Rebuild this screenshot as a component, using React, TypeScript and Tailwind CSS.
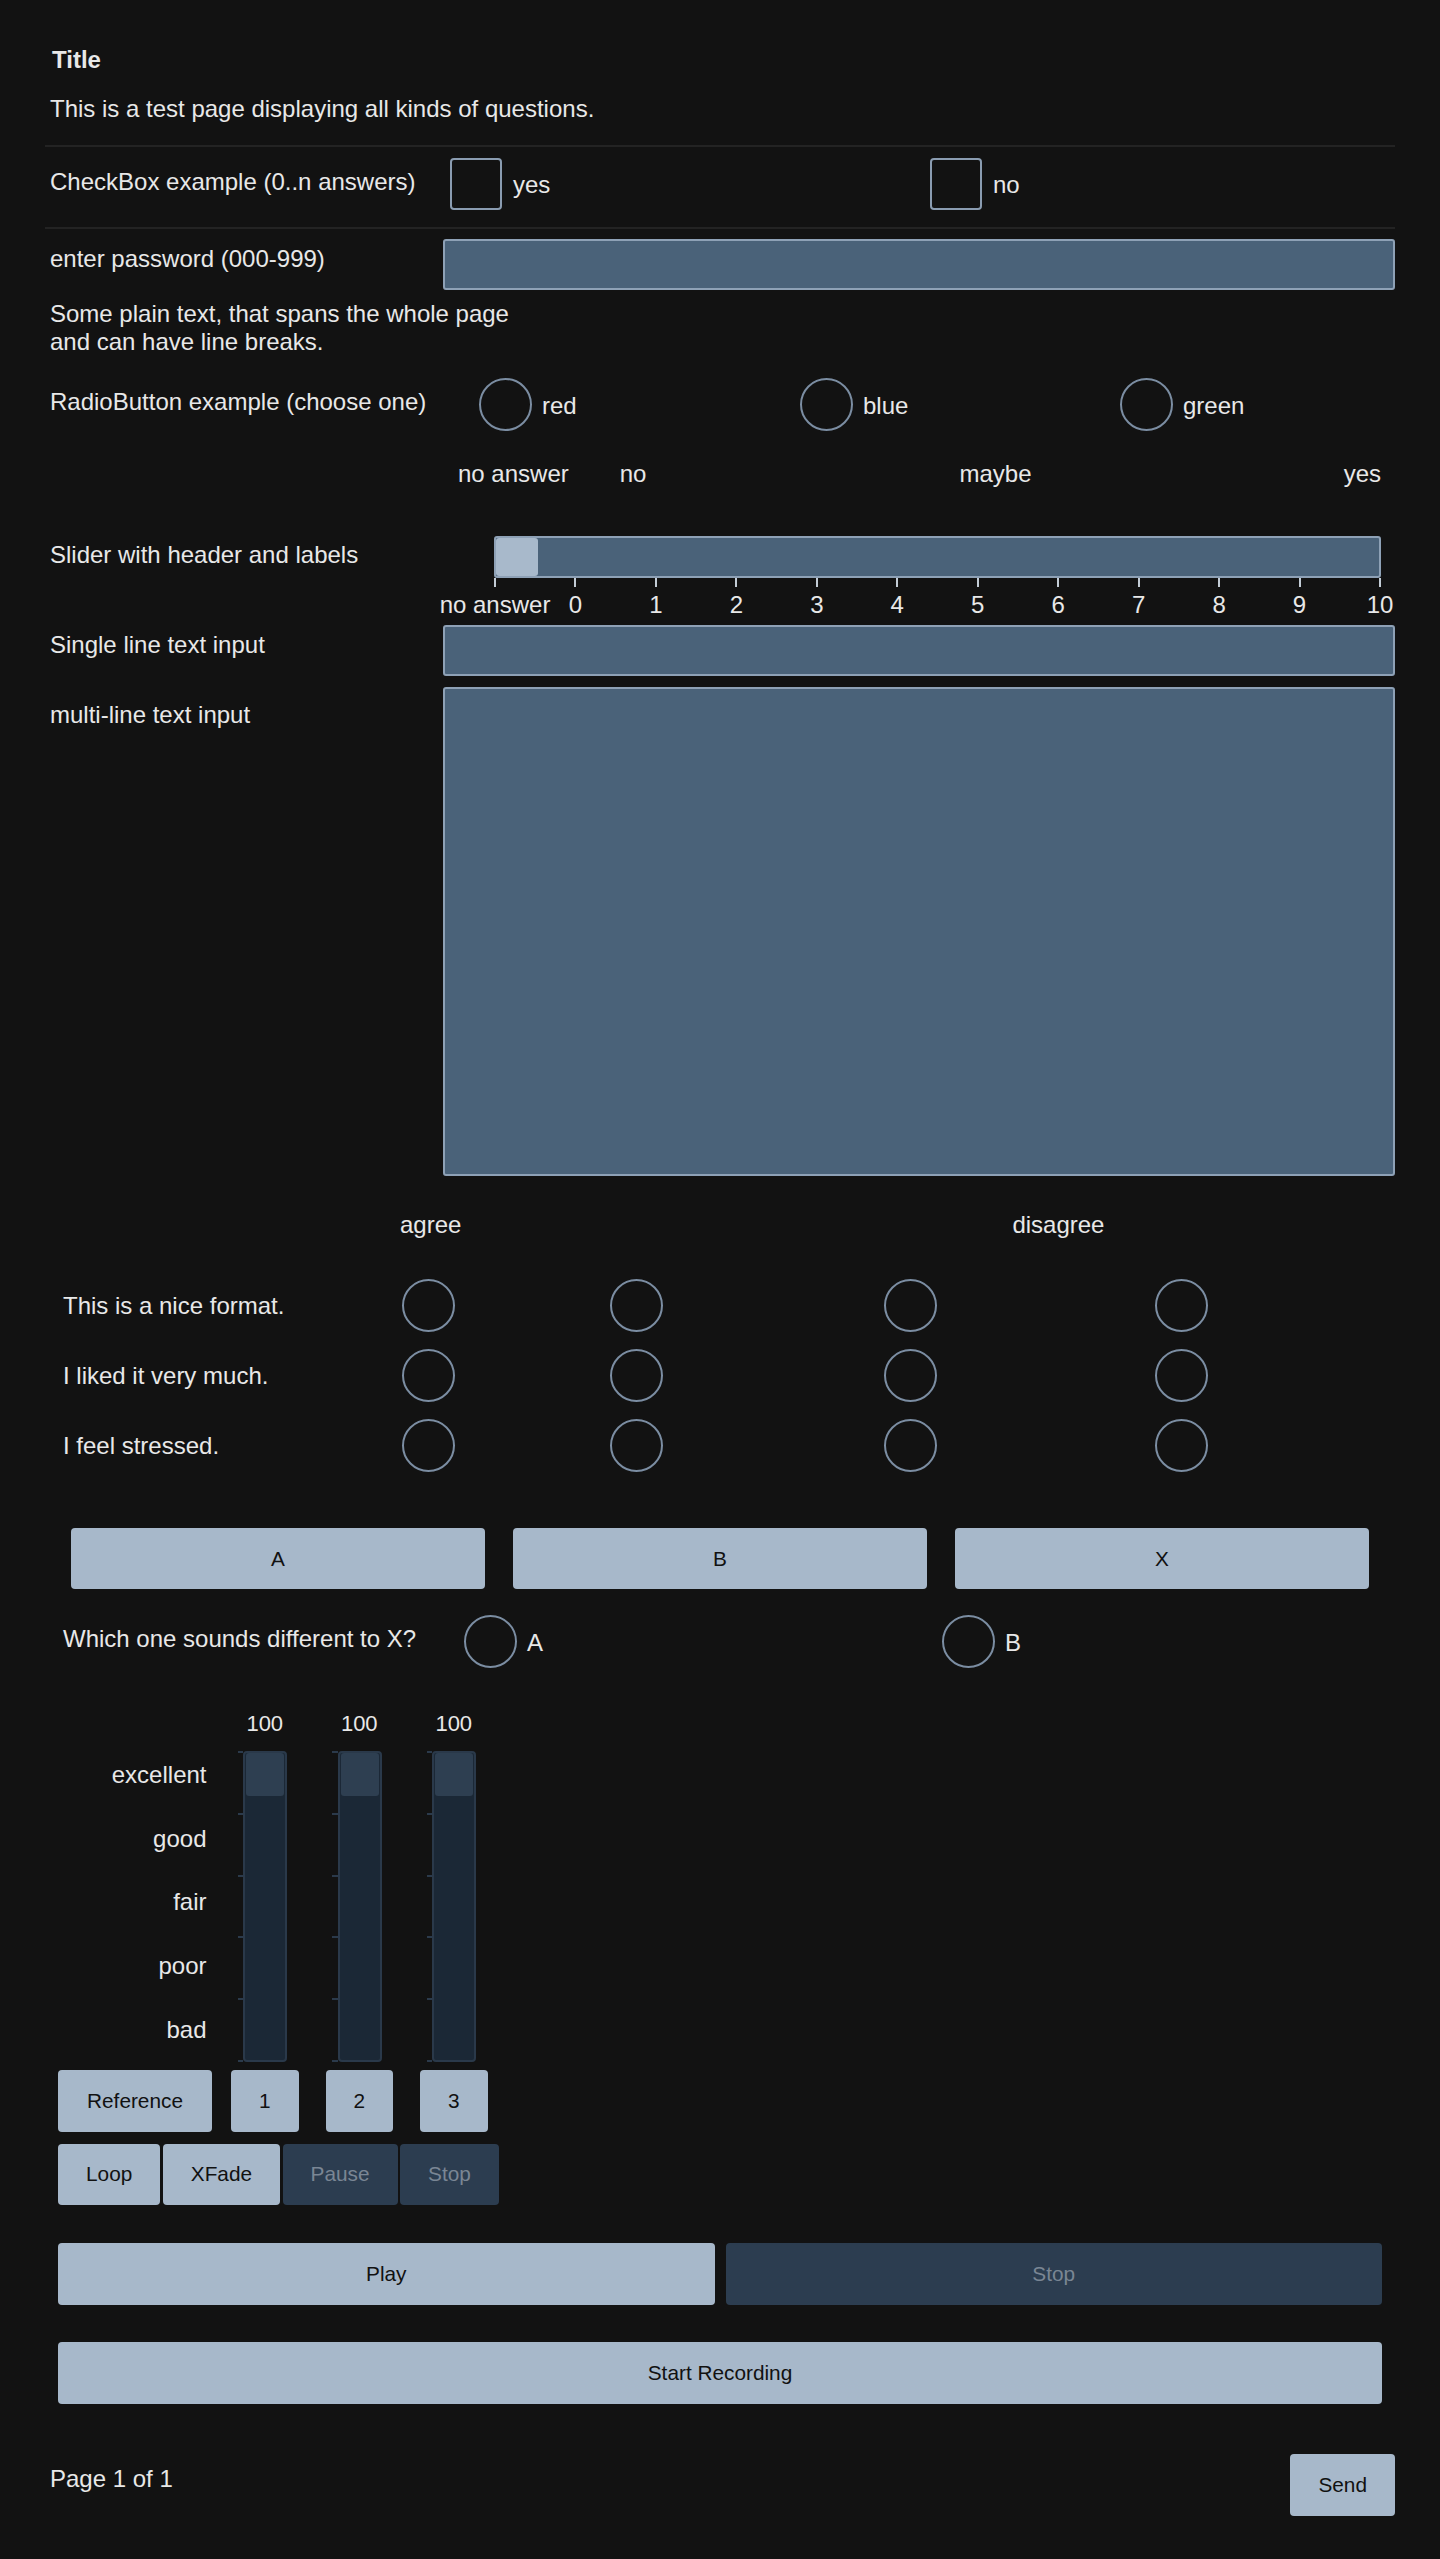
import React from "react";

const radioOptions = ["red", "blue", "green"];
const sliderTicks = ["no answer", "0", "1", "2", "3", "4", "5", "6", "7", "8", "9", "10"];
const likertRows = ["This is a nice format.", "I liked it very much.", "I feel stressed."];
const ratingLabels = ["excellent", "good", "fair", "poor", "bad"];

function Radio() {
  return <span className="block h-[53px] w-[53px] shrink-0 rounded-full border-2 border-[#7b8da2]" />;
}

function Field({ className = "" }: { className?: string }) {
  return <div className={`flex-1 rounded-[3px] border-2 border-[#8ea1b6] bg-[#4a6279] ${className}`} />;
}

function Button({ children, dark, className = "" }: { children: React.ReactNode; dark?: boolean; className?: string }) {
  return (
    <button
      className={`flex items-center justify-center rounded-[4px] text-[20.8px] ${
        dark ? "bg-[#2c3d50] text-[#7a8694]" : "bg-[#a7b8ca] text-[#111]"
      } ${className}`}
    >
      {children}
    </button>
  );
}

export default function App() {
  return (
    <div className="min-h-screen bg-[#121212] px-[45px] pt-[46px] pb-[43px] font-['Liberation_Sans',Arial,sans-serif] text-[24px] leading-[28px] text-[#e8e8e8]">
      <h1 className="pl-[7px] font-bold">Title</h1>
      <p className="mt-[21px] pl-[5px]">This is a test page displaying all kinds of questions.</p>

      <div className="mt-[22px] h-[2px] bg-[#232323]" />
      <div className="flex h-[80px] pt-[10.5px]">
        <div className="w-[398px] shrink-0 pl-[5px] pt-[10px]">CheckBox example (0..n answers)</div>
        <div className="grid grid-cols-[480px_480px] pl-[7px]">
          {["yes", "no"].map((o) => (
            <label key={o} className="flex h-[52px] items-center gap-[11px]">
              <span className="h-[52px] w-[52px] rounded-[4px] border-2 border-[#8a9cb1]" />
              <span className="pt-[2px]">{o}</span>
            </label>
          ))}
        </div>
      </div>
      <div className="h-[2px] bg-[#232323]" />

      <div className="mt-[10px] flex">
        <div className="w-[398px] shrink-0 pl-[5px] pt-[6px]">enter password (000-999)</div>
        <Field className="h-[51px]" />
      </div>

      <p className="mt-[10px] pl-[5px]">
        Some plain text, that spans the whole page
        <br />
        and can have line breaks.
      </p>

      <div className="mt-[22px] flex">
        <div className="w-[398px] shrink-0 pl-[5px] pt-[10px]">RadioButton example (choose one)</div>
        <div className="grid grid-cols-[321px_320px_320px] pl-[36px]">
          {radioOptions.map((o) => (
            <label key={o} className="flex items-center gap-[10px]">
              <Radio />
              <span className="pt-[2px]">{o}</span>
            </label>
          ))}
        </div>
      </div>

      <div className="mt-[29px] flex">
        <span className="ml-[413px]">no answer</span>
        <span className="ml-[51px]">no</span>
        <span className="ml-[313px]">maybe</span>
        <span className="ml-auto mr-[14px]">yes</span>
      </div>

      <div className="mt-[48px] flex">
        <div className="w-[398px] shrink-0 pl-[5px] pt-[5px]">Slider with header and labels</div>
        <div className="flex-1 pl-[51px] pr-[14px]">
          <div className="h-[42px] rounded-[3px] border-2 border-[#8ea1b6] bg-[#4a6279]">
            <div className="h-full w-[42px] rounded-[3px] bg-[#a8b9cb]" />
          </div>
          <div className="flex justify-between">
            {sliderTicks.map((t) => (
              <div key={t} className="flex w-[2px] flex-col items-center">
                <div className="h-[9px] w-[2px] shrink-0 bg-[#c3ccd6]" />
                <span className="mt-[4px] whitespace-nowrap">{t}</span>
              </div>
            ))}
          </div>
        </div>
      </div>

      <div className="mt-[6px] flex">
        <div className="w-[398px] shrink-0 pl-[5px] pt-[6px]">Single line text input</div>
        <Field className="h-[51px]" />
      </div>

      <div className="mt-[11px] flex">
        <div className="w-[398px] shrink-0 pl-[5px] pt-[14px]">multi-line text input</div>
        <Field className="h-[489px]" />
      </div>

      <div className="mt-[35px] flex">
        <span className="ml-[355px]">agree</span>
        <span className="ml-[551px]">disagree</span>
      </div>
      <div className="mt-[40px] flex flex-col gap-[17px]">
        {likertRows.map((r) => (
          <div key={r} className="grid grid-cols-[357px_208px_273.5px_271.5px_53px] items-center">
            <span className="pl-[18px]">{r}</span>
            <Radio />
            <Radio />
            <Radio />
            <Radio />
          </div>
        ))}
      </div>

      <div className="mt-[56px] grid grid-cols-3 gap-[28px] px-[26px]">
        {["A", "B", "X"].map((b) => (
          <Button key={b} className="h-[61px]">
            {b}
          </Button>
        ))}
      </div>

      <div className="mt-[26px] flex">
        <div className="w-[419px] shrink-0 pl-[18px] pt-[10px]">Which one sounds different to X?</div>
        <div className="grid grid-cols-[478px_478px]">
          {["A", "B"].map((o) => (
            <label key={o} className="flex items-center gap-[10px]">
              <Radio />
              <span className="pt-[2px]">{o}</span>
            </label>
          ))}
        </div>
      </div>

      <div className="ml-[13px] mt-[43px] grid grid-cols-[159.5px_94.5px_94.5px_94.5px]">
        <div />
        {[1, 2, 3].map((n) => (
          <div key={n} className="text-center text-[22px] leading-[25px]">
            100
          </div>
        ))}

        <div className="mt-[7px] flex h-[319px] flex-col pr-[11px]">
          {ratingLabels.map((l) => (
            <div key={l} className="flex flex-1 items-center justify-end">
              {l}
            </div>
          ))}
        </div>
        {[1, 2, 3].map((n) => (
          <div key={n} className="mt-[15px] flex h-[311px] pl-[20px]">
            <div className="flex w-[5.5px] flex-col justify-between">
              {[0, 1, 2, 3, 4, 5].map((t) => (
                <div key={t} className="h-[2px] bg-[#2b3a4b]" />
              ))}
            </div>
            <div className="w-[44px] rounded-[4px] border-2 border-[#2a394a] bg-[#1b2836] px-[1px]">
              <div className="h-[43px] rounded-[3px] bg-[#2e3f51]" />
            </div>
          </div>
        ))}

        <Button className="mt-[8px] h-[62px] w-[154px]">Reference</Button>
        {[1, 2, 3].map((n) => (
          <Button key={n} className="mt-[8px] h-[62px] w-[67.5px] justify-self-center">
            {n}
          </Button>
        ))}
      </div>

      <div className="ml-[13px] mt-[11.5px] flex gap-[2.5px]">
        <Button className="h-[61px] px-7">Loop</Button>
        <Button className="h-[61px] px-7">XFade</Button>
        <Button dark className="h-[61px] px-7">
          Pause
        </Button>
        <Button dark className="h-[61px] px-7">
          Stop
        </Button>
      </div>

      <div className="mx-[13px] mt-[38px] grid grid-cols-2 gap-[11px]">
        <Button className="h-[62px]">Play</Button>
        <Button dark className="h-[62px]">
          Stop
        </Button>
      </div>

      <div className="mx-[13px] mt-[37px]">
        <Button className="h-[62px] w-full">Start Recording</Button>
      </div>

      <div className="mt-[50.5px] flex items-start justify-between">
        <span className="pl-[5px] pt-[11px]">Page 1 of 1</span>
        <Button className="h-[62px] px-7">Send</Button>
      </div>
    </div>
  );
}
